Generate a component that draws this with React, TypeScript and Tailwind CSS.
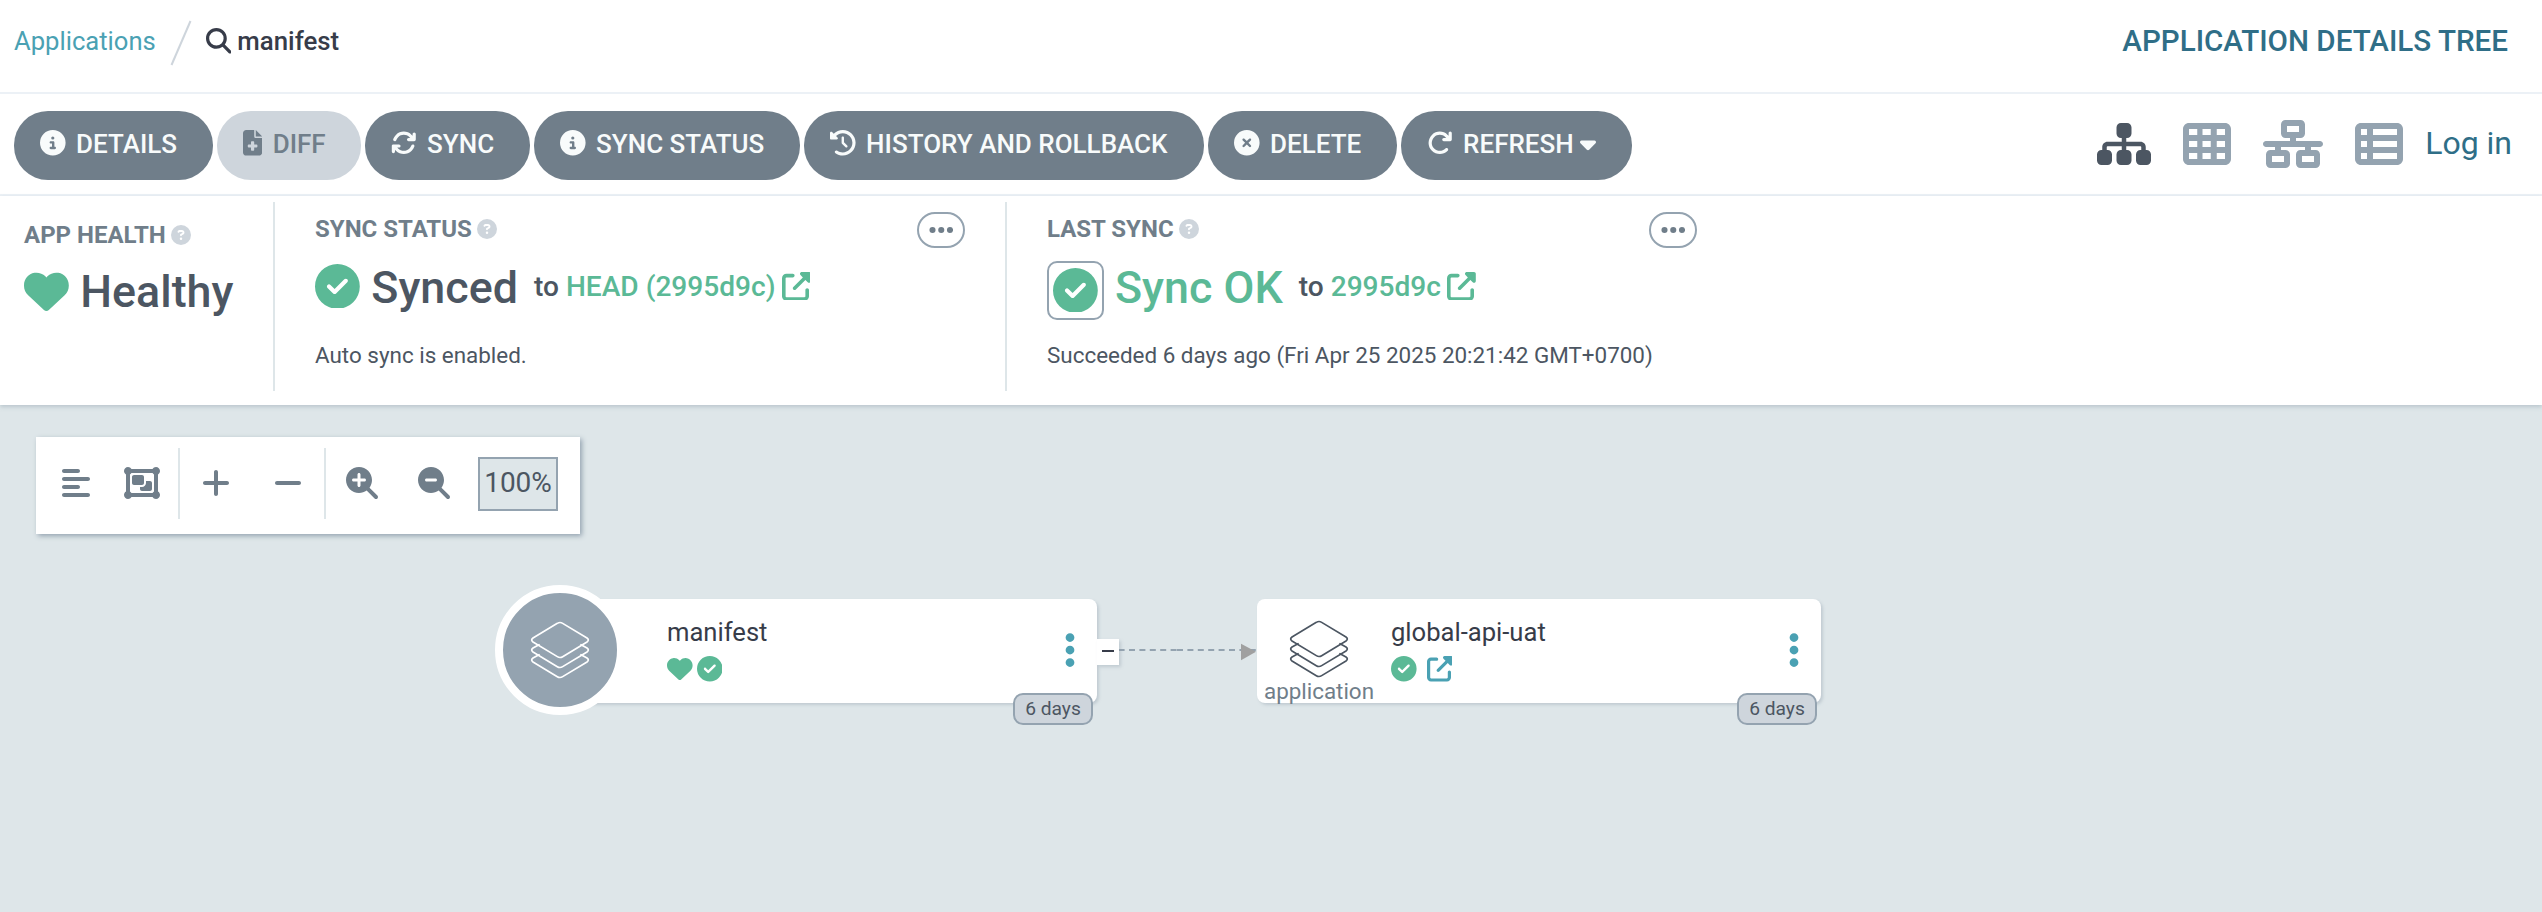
import React from 'react';
import type { IconType } from 'react-icons';
import {
  FaCircleInfo, FaFileMedical, FaArrowsRotate, FaClockRotateLeft, FaCircleXmark, FaArrowRotateRight, FaCaretDown,
  FaMagnifyingGlass, FaSitemap, FaTableCells, FaNetworkWired, FaTableList, FaCircleQuestion, FaHeart, FaCircleCheck,
  FaUpRightFromSquare, FaEllipsis, FaEllipsisVertical, FaAlignLeft, FaObjectGroup, FaPlus, FaMinus,
  FaMagnifyingGlassPlus, FaMagnifyingGlassMinus,
} from 'react-icons/fa6';

const actions: { label: string; Icon: IconType; width: string; disabled?: boolean; caret?: boolean }[] = [
  { label: 'DETAILS', Icon: FaCircleInfo, width: 'w-[199px]' },
  { label: 'DIFF', Icon: FaFileMedical, width: 'w-[144px]', disabled: true },
  { label: 'SYNC', Icon: FaArrowsRotate, width: 'w-[165px]' },
  { label: 'SYNC STATUS', Icon: FaCircleInfo, width: 'w-[266px]' },
  { label: 'HISTORY AND ROLLBACK', Icon: FaClockRotateLeft, width: 'w-[400px]' },
  { label: 'DELETE', Icon: FaCircleXmark, width: 'w-[189px]' },
  { label: 'REFRESH', Icon: FaArrowRotateRight, width: 'w-[231px]', caret: true },
];

function TopBar() {
  return (
    <header className="flex h-[94px] items-start justify-between border-b-2 border-[#ecf1f6] bg-white pl-[14px] pr-[34px]">
      <div className="flex h-[82px] items-center text-[25.6px] leading-[30px]">
        <a className="text-[#4aa1b3]">Applications</a>
        <svg className="ml-[13px] mt-[4px] h-[46px] w-[24px]" viewBox="0 0 24 46">
          <path d="M2.5 45L21.5 1" stroke="#ced5dc" strokeWidth="2" fill="none" />
        </svg>
        <FaMagnifyingGlass className="ml-[13px] h-[25.6px] w-[25.6px] text-[#373c49]" />
        <span className="ml-[6px] text-[25.8px] font-medium text-[#373c49]">manifest</span>
      </div>
      <h1 className="flex h-[82px] items-center text-[29.6px] font-medium text-[#2f6e87]">APPLICATION DETAILS TREE</h1>
    </header>
  );
}

function ActionBar() {
  return (
    <div className="flex h-[102px] items-start justify-between border-b-2 border-[#ecf1f6] bg-white pl-[14px] pr-[30px]">
      <div className="flex gap-[4px] pt-[17px]">
        {actions.map(({ label, Icon, width, disabled, caret }) => (
          <button
            key={label}
            className={`flex h-[69px] items-center rounded-[34px] pb-[3px] pl-[26px] text-[26px] font-medium ${width} ${
              disabled ? 'bg-[#ced5dc] text-[#707e8a]' : 'bg-[#707e8a] text-[#f8fbfb]'
            }`}
          >
            <Icon className={`mb-[2px] h-[25.6px] shrink-0 ${disabled ? 'w-[19.2px]' : 'w-[25.6px]'}`} />
            <span className="ml-[10.5px] whitespace-nowrap leading-[30px]">{label}</span>
            {caret && <FaCaretDown className="ml-[6.5px] h-[25.6px] w-[16px] shrink-0" />}
          </button>
        ))}
      </div>
      <div className="flex h-[100px] items-center gap-[32px] text-[#94a3b0]">
        <FaSitemap className="h-[48px] w-[54px] text-[#4c5662]" />
        <FaTableCells className="h-[48px] w-[48px]" />
        <FaNetworkWired className="h-[48px] w-[60px]" />
        <FaTableList className="h-[48px] w-[48px]" />
        <a className="-ml-[10px] pb-[2px] text-[32px] leading-[38px] text-[#2f6e87]">Log in</a>
      </div>
    </div>
  );
}

function StatusTitle({ text }: { text: string }) {
  return (
    <div className="flex h-[24px] items-center text-[24px] font-bold leading-[24px] text-[#707e8a]">
      {text}
      <FaCircleQuestion className="ml-[5px] h-[20px] w-[20px] text-[#ced5dc]" />
    </div>
  );
}

function MoreButton() {
  return (
    <button className="absolute left-[642px] top-[10px] flex h-[36px] w-[48px] items-center justify-center rounded-[18px] border-2 border-[#94a3b0] text-[#707e8a]">
      <FaEllipsis className="mb-[1px] h-[28px] w-[24.5px]" />
    </button>
  );
}

function Revision({ text }: { text: string }) {
  return (
    <div className="flex items-center text-[28.1px] font-medium leading-[34px]">
      <span className="pt-[1px] text-[#4c5662]">to</span>
      <span className="ml-[7px] whitespace-nowrap pt-[1px] text-[#5bb996]">{text}</span>
      <FaUpRightFromSquare className="ml-[6px] h-[28.8px] w-[28.8px] text-[#5bb996]" />
    </div>
  );
}

function StatusPanel() {
  return (
    <section className="relative z-10 flex h-[209px] bg-white pt-[6px] shadow-[0_2px_4px_rgba(120,140,155,0.35)]">
      <div className="h-[189px] w-[275px] border-r-2 border-[#dee6e9] pl-[24px] pt-[20.5px]">
        <StatusTitle text="APP HEALTH" />
        <div className="mt-[21px] flex h-[48px] items-center text-[44.8px] font-medium leading-[48px] text-[#4c5662]">
          <FaHeart className="h-[44.8px] w-[44.8px] text-[#5bb996]" />
          <span className="ml-[11.5px]">Healthy</span>
        </div>
      </div>
      <div className="relative h-[189px] w-[732px] border-r-2 border-[#dee6e9] pl-[40px] pt-[15px]">
        <StatusTitle text="SYNC STATUS" />
        <div className="mt-[22px] flex h-[46px] items-center">
          <FaCircleCheck className="h-[44.8px] w-[44.8px] text-[#5bb996]" />
          <span className="ml-[11.5px] mr-[16px] pt-[3px] text-[44.8px] font-medium leading-[46px] text-[#4c5662]">Synced</span>
          <Revision text="HEAD (2995d9c)" />
        </div>
        <p className="mt-[32px] text-[22.43px] leading-[28px] text-[#4c5662]">Auto sync is enabled.</p>
        <MoreButton />
      </div>
      <div className="relative h-[189px] w-[732px] pl-[40px] pt-[15px]">
        <StatusTitle text="LAST SYNC" />
        <div className="mt-[22px] flex h-[46px] items-center">
          <div className="mt-[8px] flex h-[59px] w-[57px] shrink-0 items-center justify-center rounded-[10px] border-2 border-[#94a3b0]">
            <FaCircleCheck className="h-[44.8px] w-[44.8px] text-[#5bb996]" />
          </div>
          <span className="ml-[11px] mr-[16px] whitespace-nowrap pt-[3px] text-[44.8px] font-medium leading-[46px] text-[#5bb996]">Sync OK</span>
          <Revision text="2995d9c" />
        </div>
        <p className="mt-[32px] whitespace-nowrap text-[22.43px] leading-[28px] text-[#4c5662]">
          Succeeded 6 days ago (Fri Apr 25 2025 20:21:42 GMT+0700)
        </p>
        <MoreButton />
      </div>
    </section>
  );
}

function GraphToolbar() {
  return (
    <div className="ml-[36px] mt-[31px] flex h-[97px] w-[544px] bg-white text-[#707e8a] shadow-[2px_2px_5px_#94a3b0]">
      <div className="mt-[11px] flex h-[71px] w-[144px] items-center border-r-2 border-[#dee6e9] pb-[1px] pl-[26px]">
        <FaAlignLeft className="h-[32px] w-[28px]" />
        <FaObjectGroup className="ml-[34px] h-[32px] w-[36px]" />
      </div>
      <div className="mt-[11px] flex h-[71px] w-[146px] items-center border-r-2 border-[#dee6e9] pb-[1px] pl-[22px]">
        <FaPlus className="h-[32px] w-[28px]" />
        <FaMinus className="ml-[44px] h-[32px] w-[28px]" />
      </div>
      <div className="mt-[11px] flex h-[71px] items-center pb-[1px] pl-[20px]">
        <FaMagnifyingGlassPlus className="h-[32px] w-[32px]" />
        <FaMagnifyingGlassMinus className="ml-[40px] h-[32px] w-[32px]" />
        <div className="ml-[28px] mt-[2px] flex h-[54px] w-[80px] items-center justify-center border-2 border-[#94a3b0] bg-[#dee6e9] pb-[3px] text-[28px] text-[#4c5662]">
          100%
        </div>
      </div>
    </div>
  );
}

function LayersIcon({ className }: { className: string }) {
  return (
    <svg className={className} viewBox="150 150 180 174" fill="none" stroke="currentColor" strokeWidth="5" strokeLinecap="round" strokeLinejoin="round">
      <path d="M232 157Q240 152 248 157L321 201Q329 207 321 213L248 257Q240 262 232 257L159 213Q151 207 159 201Z" />
      <path d="M177 221L159 231Q151 237 159 243L232 287Q240 292 248 287L321 243Q329 237 321 231L303 221" />
      <path d="M177 251L159 261Q151 267 159 273L232 317Q240 322 248 317L321 273Q329 267 321 261L303 251" />
    </svg>
  );
}

function ResourceNode({ name, place, children, badges }: { name: string; place: string; children: React.ReactNode; badges: React.ReactNode }) {
  return (
    <div className={`absolute top-[194px] h-[104px] w-[564px] rounded-[8px] bg-white shadow-[2px_2px_3px_rgba(140,155,168,0.35)] ${place}`}>
      {children}
      <div className="flex h-full items-center justify-between pl-[134px] pr-[22px]">
        <div className="flex flex-col pb-[3px]">
          <span className="text-[25.6px] leading-[30px] text-[#373c49]">{name}</span>
          <div className="mt-[9px] flex h-[26px] items-center">{badges}</div>
        </div>
        <FaEllipsisVertical className="mt-[-2px] h-[40px] w-[10px] text-[#4aa1b3]" />
      </div>
      <div className="absolute left-[480px] top-[94px] flex h-[32px] w-[80px] items-center justify-center rounded-[10px] border-2 border-[#94a3b0] bg-[#ced5dc] pb-[1px] text-[19.2px] leading-[24px] text-[#4c5662]">
        6 days
      </div>
    </div>
  );
}

function Graph() {
  return (
    <main className="relative h-[507px] overflow-hidden bg-[#dee6e9] pt-px">
      <GraphToolbar />
      <svg className="absolute left-[1119px] top-[234px] h-[26px] w-[140px]" viewBox="0 0 140 26">
        <path d="M-0.4 11H58M58 11H138" stroke="#94a3b0" strokeWidth="2" strokeDasharray="6 4.4" />
        <path d="M122 4.7L137 12.7L122 21.3Z" fill="#a0a0a0" />
      </svg>
      <ResourceNode
        name="manifest"
        place="left-[533px]"
        badges={
          <>
            <FaHeart className="h-[25.6px] w-[25.6px] text-[#5bb996]" />
            <FaCircleCheck className="ml-[4px] h-[25.6px] w-[25.6px] text-[#5bb996]" />
          </>
        }
      >
        <div className="absolute left-[-38px] top-[-14px] flex h-[130px] w-[130px] items-center justify-center rounded-full border-8 border-white bg-[#94a3b0]">
          <LayersIcon className="h-[58px] w-[60px] text-white" />
        </div>
        <div className="absolute left-[564px] top-[40px] flex h-[26px] w-[22px] items-center bg-white pb-[2px] pl-[5px] shadow-[2px_2px_3px_rgba(140,155,168,0.35)]">
          <div className="h-[2px] w-[12px] bg-[#373c49]" />
        </div>
      </ResourceNode>
      <ResourceNode
        name="global-api-uat"
        place="left-[1257px]"
        badges={
          <>
            <FaCircleCheck className="h-[25.6px] w-[25.6px] text-[#5bb996]" />
            <FaUpRightFromSquare className="ml-[10px] h-[25.6px] w-[25.6px] text-[#4aa1b3]" />
          </>
        }
      >
        <div className="absolute left-[7px] top-[21px] flex w-[110px] flex-col items-center">
          <LayersIcon className="h-[58px] w-[60px] text-[#4c5662]" />
          <span className="mt-[-1px] text-[22.4px] leading-[28px] text-[#707e8a]">application</span>
        </div>
      </ResourceNode>
    </main>
  );
}

export default function App() {
  return (
    <div className="h-[912px] w-[2542px] overflow-hidden bg-[#dee6e9] font-[Roboto,sans-serif]">
      <TopBar />
      <ActionBar />
      <StatusPanel />
      <Graph />
    </div>
  );
}
